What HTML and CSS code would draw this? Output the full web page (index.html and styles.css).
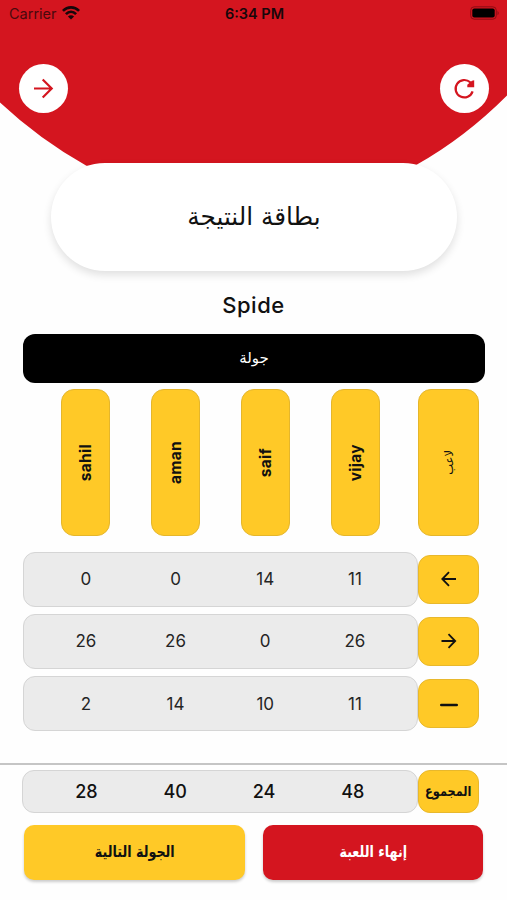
FILE: index.html
```html
<!DOCTYPE html>
<html lang="ar">
<head>
<meta charset="utf-8">
<meta name="viewport" content="width=device-width, initial-scale=1">
<title>بطاقة النتيجة</title>
<link rel="stylesheet" href="styles.css">
</head>
<body>
<div class="screen">
  <header class="header">
    <svg class="header-shape" viewBox="0 0 507 180" aria-hidden="true"><path fill="#d4151f" d="M0 0H507V95.500Q465 137.500 417 164.500L400 175H105L86 165.500Q39 139 0 102.500Z"/></svg>
    <div class="status">
      <div class="carrier">Carrier
        <svg width="18" height="14" viewBox="0 0 18 14"><g fill="none" stroke="#17070a" stroke-width="2.700"><path d="M.9 4.900C5.500.3 12.500.3 17.100 4.900M3.900 8.100C6.900 5.200 11.100 5.200 14.100 8.100"/></g><path fill="#17070a" d="M9 13.600 5.900 10.500Q9 8 12.100 10.500Z"/></svg>
      </div>
      <div class="time">6:34 PM</div>
      <svg class="battery" width="30" height="14" viewBox="0 0 30 14"><rect x=".7" y=".8" width="25.600" height="12.400" rx="3.500" fill="none" stroke="#8e0c14"/><rect x="2.300" y="2.400" width="22.400" height="9.200" rx="2"/><path fill="#8e0c14" d="M27.500 4.700Q30 7 27.500 9.300Z"/></svg>
    </div>
    <div class="nav">
      <button class="round" aria-label="رجوع"><svg width="49" height="49" viewBox="0 0 49 49"><path d="M15 24.500H32.500M23.700 15.500 32.700 24.500 23.700 33.500" fill="none" stroke="#d4151f" stroke-width="2.200"/></svg></button>
      <button class="round" aria-label="تحديث"><svg width="49" height="49" viewBox="0 0 49 49"><path d="M32.600 27.300A8.700 8.700 0 1 1 30.200 18.300L32 20.500" fill="none" stroke="#d4151f" stroke-width="2.200"/><path fill="#d4151f" d="M34.200 16.300V23.200H27.300V20.700L32 16.800Z"/></svg></button>
    </div>
    <h1 class="title" dir="rtl">بطاقة النتيجة</h1>
  </header>
  <main>
    <h2 class="game">Spide</h2>
    <div class="round-bar" dir="rtl">جولة</div>
    <div class="players">
      <div class="names">
        <div class="tile"><span>sahil</span></div>
        <div class="tile"><span>aman</span></div>
        <div class="tile"><span>saif</span></div>
        <div class="tile"><span>vijay</span></div>
      </div>
      <div class="tile label"><span class="ar" dir="rtl">لاعب</span></div>
    </div>
    <div class="rows">
      <div class="row"><div class="scores"><span>0</span><span>0</span><span>14</span><span>11</span></div><div class="mark"><svg width="18" height="18" viewBox="0 0 18 18"><path d="M16 9H2.500M9 2.200 2.300 9 9 15.800"/></svg></div></div>
      <div class="row"><div class="scores"><span>26</span><span>26</span><span>0</span><span>26</span></div><div class="mark"><svg width="18" height="18" viewBox="0 0 18 18"><path d="M1.500 9H15M8.500 2.200 15.200 9 8.500 15.800"/></svg></div></div>
      <div class="row"><div class="scores"><span>2</span><span>14</span><span>10</span><span>11</span></div><div class="mark"><svg width="18" height="18" viewBox="0 0 18 18"><path class="bar" d="M1.300 10H16.700"/></svg></div></div>
    </div>
  </main>
  <footer>
    <div class="row total"><div class="scores"><span>28</span><span>40</span><span>24</span><span>48</span></div><div class="mark" dir="rtl"><span class="narrow">المجموع</span></div></div>
    <div class="actions">
      <button class="action next" dir="rtl"><span class="narrow">الجولة التالية</span></button>
      <button class="action end" dir="rtl"><span class="narrow">إنهاء اللعبة</span></button>
    </div>
  </footer>
</div>
</body>
</html>
```
FILE: styles.css
```css
* { box-sizing: border-box; }
body { margin: 0; background: #fefefe; color: #111; font-family: Inter, "DejaVu Sans", sans-serif; }
button { border: 0; padding: 0; font: inherit; }
h1, h2 { margin: 0; font-weight: 400; }
svg { display: block; flex: none; }
.screen { height: 900px; overflow: hidden; display: flex; flex-direction: column; }
.header { position: relative; height: 271px; }
.header-shape { position: absolute; inset: 0 0 auto; width: 507px; height: 180px; }
.status { position: relative; height: 28px; padding: 0 7px 2px 9px; display: grid; grid-template-columns: 1fr auto 1fr; align-items: center; color: #17070a; font-size: 14.5px; }
.carrier { display: flex; align-items: center; gap: 5px; color: #4a090d; }
.time { font-weight: 600; font-size: 14.5px; }
.battery { justify-self: end; }
.nav { position: relative; display: flex; justify-content: space-between; padding: 36px 18px 0 19px; }
.round { width: 49px; height: 49px; border-radius: 50%; background: #fff; }
.title { position: relative; width: 406px; height: 108px; margin: 50px 0 0 51px; padding-bottom: 2px; border-radius: 54px; background: #fff; display: flex; align-items: center; justify-content: center; font: 24.7px "DejaVu Sans", sans-serif; box-shadow: 0 4px 8px rgba(0,0,0,.12); }
.game { margin-top: 18px; height: 32px; line-height: 32px; text-align: center; font-size: 22px; font-weight: 500; letter-spacing: .5px; }
.round-bar { width: 462px; height: 49px; margin: 13px 0 0 23px; padding-bottom: 2px; border-radius: 12px; background: #000; color: #fff; display: flex; align-items: center; justify-content: center; font: 15px "DejaVu Sans", sans-serif; }
.players { display: flex; margin-top: 6px; padding-left: 23px; }
.names { width: 395px; padding: 0 17px 0 17px; display: grid; grid-template-columns: repeat(4, 90.200px); justify-items: center; }
.tile { width: 49px; height: 147px; border: 1px solid #e5b62b; border-radius: 13px; background: #ffc927; display: flex; align-items: center; justify-content: center; font-weight: 700; font-size: 15.5px; letter-spacing: .3px; }
.tile span { writing-mode: vertical-rl; transform: rotate(180deg); }
.tile.label { width: 61px; }
.tile .ar { font: 11.5px "DejaVu Sans", sans-serif; letter-spacing: 0; }
.rows { margin-top: 15.5px; display: grid; gap: 7.300px; }
.row { display: flex; align-items: center; padding-left: 23px; }
.scores { width: 395px; height: 55px; padding-left: 17px; border: 1.500px solid #d5d5d5; border-radius: 12px; background: #ebebeb; display: grid; grid-template-columns: repeat(4, 89.700px); align-items: center; text-align: center; font-size: 17px; color: #252525; }
.mark { width: 61px; height: 49px; border: 1px solid #e8b82c; border-radius: 12px; background: #ffc927; display: flex; align-items: center; justify-content: center; }
.mark path { fill: none; stroke: #111; stroke-width: 1.800; }
.mark .bar { stroke-width: 2.600; stroke-linecap: round; }
.narrow { display: inline-block; white-space: nowrap; transform: scaleX(.82); }
footer { margin-top: 31.5px; border-top: 2px solid #c5c5c5; padding-top: 5px; }
.total { padding-left: 22px; }
.total .scores { width: 396px; height: 43px; padding-left: 19px; grid-template-columns: repeat(4, 88.800px); font-size: 18px; font-weight: 500; color: #111; }
.total .mark { height: 43px; font: bold 13.8px "DejaVu Sans", sans-serif; }
.actions { display: grid; grid-template-columns: 221px 220px; gap: 18px; padding: 12px 0 0 24px; }
.action { height: 55px; border-radius: 10px; font: bold 15.5px "DejaVu Sans", sans-serif; box-shadow: 0 2px 3px rgba(0,0,0,.2); }
.next { background: #ffc927; color: #111; }
.end { background: #d4151f; color: #fff; }
```
